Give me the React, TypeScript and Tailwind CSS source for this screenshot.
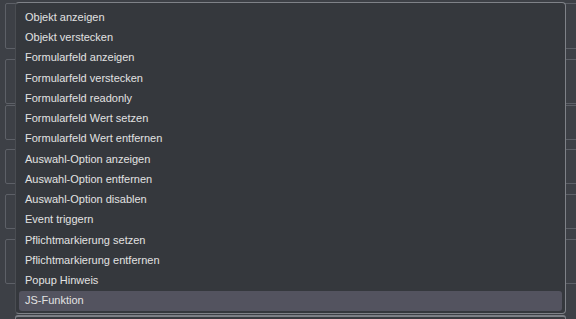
import React from "react";

const items = [
  "Objekt anzeigen",
  "Objekt verstecken",
  "Formularfeld anzeigen",
  "Formularfeld verstecken",
  "Formularfeld readonly",
  "Formularfeld Wert setzen",
  "Formularfeld Wert entfernen",
  "Auswahl-Option anzeigen",
  "Auswahl-Option entfernen",
  "Auswahl-Option disablen",
  "Event triggern",
  "Pflichtmarkierung setzen",
  "Pflichtmarkierung entfernen",
  "Popup Hinweis",
  "JS-Funktion",
];

const bgBoxes = [
  { h: 46, mt: 3 },
  { h: 45, mt: 10 },
  { h: 35, mt: 1 },
  { h: 35, mt: 9 },
  { h: 35, mt: 10 },
  { h: 45, mt: 10 },
];

export default function App() {
  return (
    <div
      className="relative w-[576px] h-[319px] overflow-hidden bg-[#3d4046]"
      style={{ fontFamily: '"Liberation Sans", Arial, sans-serif' }}
    >
      <div className="flex flex-col pl-[5px]">
        {bgBoxes.map((b, i) => (
          <div
            key={i}
            className="w-[620px] border border-[#5d6067] rounded-[2px]"
            style={{ height: b.h, marginTop: b.mt }}
          />
        ))}
      </div>
      <div className="absolute left-[15px] top-[315px] w-[551px] h-[10px] border-t-2 border-x border-[#7c7f85] rounded-t-[3px] bg-[#383b40]" />
      <div className="absolute left-[15px] top-[2px] w-[551px] h-[312px] rounded-[4px] border border-[#7f8288] border-l-[#4a4d52] bg-[#35383d] pt-[4px] px-[3px] pb-[3px]">
        {items.map((t, i) => (
          <div
            key={t}
            className={
              "h-[20.25px] flex items-center pl-[6px] rounded-[3px] text-[11px] text-[#e2e2e2] " +
              (i === items.length - 1 ? "bg-[#53535f]" : "")
            }
          >
            {t}
          </div>
        ))}
      </div>
    </div>
  );
}
